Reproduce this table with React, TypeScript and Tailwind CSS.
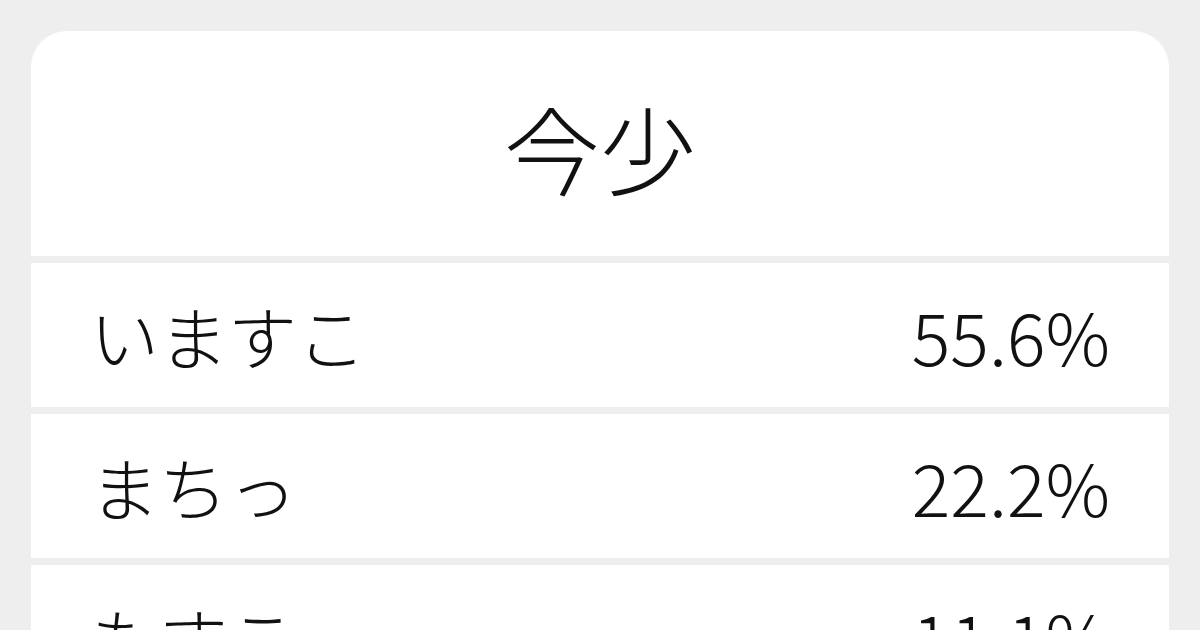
const rows = [
  { reading: 'いますこ', ratio: '55.6%' },
  { reading: 'まちっ', ratio: '22.2%' },
  { reading: 'もすこ', ratio: '11.1%' },
];

const font = { fontFamily: '"Noto Sans CJK JP", "Noto Sans", sans-serif' };

export default function App() {
  return (
    <div className="h-[630px] overflow-hidden bg-[#eeeeee] px-[31px] pt-[31px]" style={font}>
      <div className="flex flex-col gap-[7px] overflow-hidden rounded-t-[36px]">
        {/* Kanji header */}
        <div className="flex h-[225px] items-center justify-center bg-white pt-[6px]">
          <h1 className="text-[96px] font-light leading-none text-[#111111]">今少</h1>
        </div>

        {/* Readings */}
        {rows.map((row) => (
          <div
            key={row.reading}
            className="flex h-[144px] items-center justify-between bg-white pl-[59px] pr-[59px] font-light leading-none text-[#111111]"
          >
            <span className="text-[69px]">{row.reading}</span>
            <span className="text-[72px]">{row.ratio}</span>
          </div>
        ))}
      </div>
    </div>
  );
}
